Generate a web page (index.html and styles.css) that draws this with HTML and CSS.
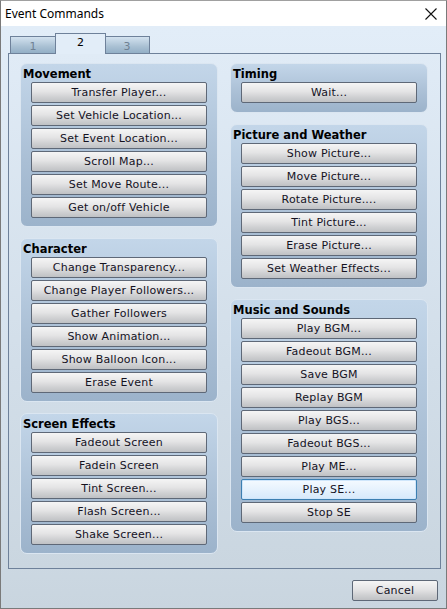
FILE: index.html
```html
<!DOCTYPE html>
<html>
<head>
<meta charset="utf-8">
<link rel="stylesheet" href="styles.css">
</head>
<body>
<div class="window">
  <div class="titlebar">
    <span class="title">Event Commands</span>
    <svg class="close" width="12" height="12" viewBox="0 0 12 12"><path d="M0.5 0.5 L11.5 11.5 M11.5 0.5 L0.5 11.5" stroke="#111" stroke-width="1.1" fill="none"/></svg>
  </div>
  <div class="client">
    <div class="tabs">
      <div class="tab">1</div>
      <div class="tab active">2</div>
      <div class="tab">3</div>
    </div>
    <div class="panel">
      <div class="col">
        <div class="group">
          <div class="gtitle">Movement</div>
          <div class="btns">
            <div class="btn">Transfer Player...</div>
            <div class="btn">Set Vehicle Location...</div>
            <div class="btn">Set Event Location...</div>
            <div class="btn">Scroll Map...</div>
            <div class="btn">Set Move Route...</div>
            <div class="btn">Get on/off Vehicle</div>
          </div>
        </div>
        <div class="group">
          <div class="gtitle">Character</div>
          <div class="btns">
            <div class="btn">Change Transparency...</div>
            <div class="btn">Change Player Followers...</div>
            <div class="btn">Gather Followers</div>
            <div class="btn">Show Animation...</div>
            <div class="btn">Show Balloon Icon...</div>
            <div class="btn">Erase Event</div>
          </div>
        </div>
        <div class="group">
          <div class="gtitle">Screen Effects</div>
          <div class="btns">
            <div class="btn">Fadeout Screen</div>
            <div class="btn">Fadein Screen</div>
            <div class="btn">Tint Screen...</div>
            <div class="btn">Flash Screen...</div>
            <div class="btn">Shake Screen...</div>
          </div>
        </div>
      </div>
      <div class="col">
        <div class="group timing">
          <div class="gtitle">Timing</div>
          <div class="btns">
            <div class="btn">Wait...</div>
          </div>
        </div>
        <div class="group">
          <div class="gtitle">Picture and Weather</div>
          <div class="btns">
            <div class="btn">Show Picture...</div>
            <div class="btn">Move Picture...</div>
            <div class="btn">Rotate Picture....</div>
            <div class="btn">Tint Picture...</div>
            <div class="btn">Erase Picture...</div>
            <div class="btn">Set Weather Effects...</div>
          </div>
        </div>
        <div class="group">
          <div class="gtitle">Music and Sounds</div>
          <div class="btns">
            <div class="btn">Play BGM...</div>
            <div class="btn">Fadeout BGM...</div>
            <div class="btn">Save BGM</div>
            <div class="btn">Replay BGM</div>
            <div class="btn">Play BGS...</div>
            <div class="btn">Fadeout BGS...</div>
            <div class="btn">Play ME...</div>
            <div class="btn focus">Play SE...</div>
            <div class="btn">Stop SE</div>
          </div>
        </div>
      </div>
    </div>
    <div class="footer">
      <div class="btn cancel">Cancel</div>
    </div>
  </div>
</div>
</body>
</html>
```

FILE: styles.css
```css
html, body {
  margin: 0;
  padding: 0;
  background: #ffffff;
}
.window {
  width: 447px;
  height: 609px;
  box-sizing: border-box;
  border: 1px solid #7a7a7a;
  border-top-color: #a0a0a0;
  display: flex;
  flex-direction: column;
  font-family: "DejaVu Sans", Verdana, sans-serif;
}
.titlebar {
  height: 25px;
  background: #ffffff;
  display: flex;
  align-items: center;
  justify-content: space-between;
  padding: 0 9px 0 4px;
  flex: none;
}
.title {
  font-family: "Noto Sans", "Liberation Sans", sans-serif;
  font-size: 12px;
  color: #000;
}
.close {
  display: block;
}
.client {
  flex: 1;
  background: linear-gradient(#e2edf8, #d4e0eb 70%, #c9d5df);
  padding: 6px 5px 0 7px;
  display: flex;
  flex-direction: column;
}
.tabs {
  display: flex;
  align-items: flex-end;
  padding-left: 2px;
  height: 21px;
  position: relative;
  z-index: 1;
}
.tab {
  width: 44px;
  height: 16px;
  box-sizing: content-box;
  border: 1px solid #6e819a;
  border-bottom: none;
  background: linear-gradient(#d3e2ef, #a9c0d3 60%, #93afc6);
  color: #6f8193;
  font-size: 11px;
  text-align: center;
  line-height: 19px;
}
.tab.active {
  width: 49px;
  height: 20px;
  background: #e2edf8;
  color: #000;
  line-height: 18px;
  margin: 0 -1px -1px;
  position: relative;
  z-index: 2;
}
.tab.active + .tab { border-left: none; }
.panel {
  height: 516px;
  box-sizing: border-box;
  border: 1px solid #6e819a;
  padding: 9px 12px 0 11px;
  display: flex;
  gap: 12px;
  background: linear-gradient(#e0ebf6, #d2dee9 60%, #cad6e0);
}
.col {
  width: 198px;
  display: flex;
  flex-direction: column;
  gap: 11px;
}
.group {
  border: 1px solid #dbe6f1;
  border-radius: 7px;
  background: linear-gradient(#c3d6e9, #aabfd5 60%, #9cb3cb);
  padding: 2px 0 8px 0;
}
.group.timing {
  padding-bottom: 9px;
}
.gtitle {
  font-weight: bold;
  font-size: 11.5px;
  color: #000;
  padding-left: 2px;
  height: 16px;
  line-height: 16px;
}
.btns {
  display: flex;
  flex-direction: column;
  gap: 2px;
  padding-left: 10px;
}
.btn {
  width: 176px;
  height: 21px;
  box-sizing: border-box;
  border: 1px solid #5e6877;
  border-radius: 2px;
  background: linear-gradient(#f5f5f5, #e4e4e5 45%, #cfd0d2 75%, #bfc1c4);
  font-size: 11px;
  letter-spacing: 0.2px;
  color: #14121f;
  text-align: center;
  line-height: 19px;
  white-space: nowrap;
}
.btn.focus {
  border-color: #3c7fb1;
  background: linear-gradient(#f4faff, #e6f2fd 50%, #d6e9fb);
  box-shadow: inset 0 0 0 1px #cfe6fb;
}
.footer {
  display: flex;
  justify-content: flex-end;
  padding: 11px 3px 0 0;
}
.btn.cancel {
  width: 86px;
}
```
